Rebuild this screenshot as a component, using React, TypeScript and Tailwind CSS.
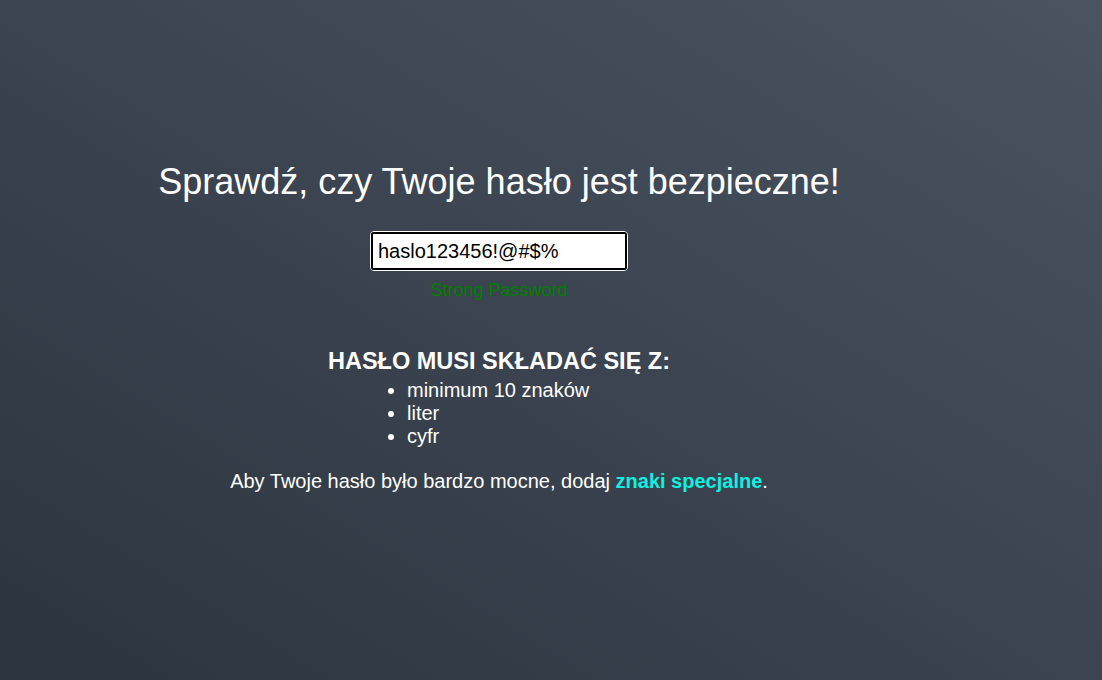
export default function App() {
  return (
    <div className="min-h-[680px] w-full bg-gradient-to-tr from-[#2c343f] to-[#4a5461] font-['Liberation_Sans',Arial,sans-serif] text-white">
      <div className="flex w-[998px] flex-col items-center pt-[159px]">
        <h1 className="text-[36px] leading-[46px]">Sprawdź, czy Twoje hasło jest bezpieczne!</h1>
        <div className="mt-[26px] rounded-[4px] border border-white">
          <div className="rounded-[3px] border-2 border-black bg-white">
            <input
              readOnly
              value="haslo123456!@#$%"
              className="block h-[34px] w-[252px] bg-white px-[5px] text-[20px] text-black outline-none"
            />
          </div>
        </div>
        <p className="mt-[8px] text-[18px] leading-[22px] text-[#008000]">Strong Password</p>
        <h2 className="mt-[47px] text-[23.5px] font-bold leading-[26px]">HASŁO MUSI SKŁADAĆ SIĘ Z:</h2>
        <ul className="mt-[5px] w-[264px] list-disc pl-[40px] text-[20px] leading-[23px]">
          <li>minimum 10 znaków</li>
          <li>liter</li>
          <li>cyfr</li>
        </ul>
        <p className="mt-[22px] text-[20px] leading-[23px]">
          Aby Twoje hasło było bardzo mocne, dodaj <span className="font-bold text-[#0ff0e0]">znaki specjalne</span>.
        </p>
      </div>
    </div>
  )
}
